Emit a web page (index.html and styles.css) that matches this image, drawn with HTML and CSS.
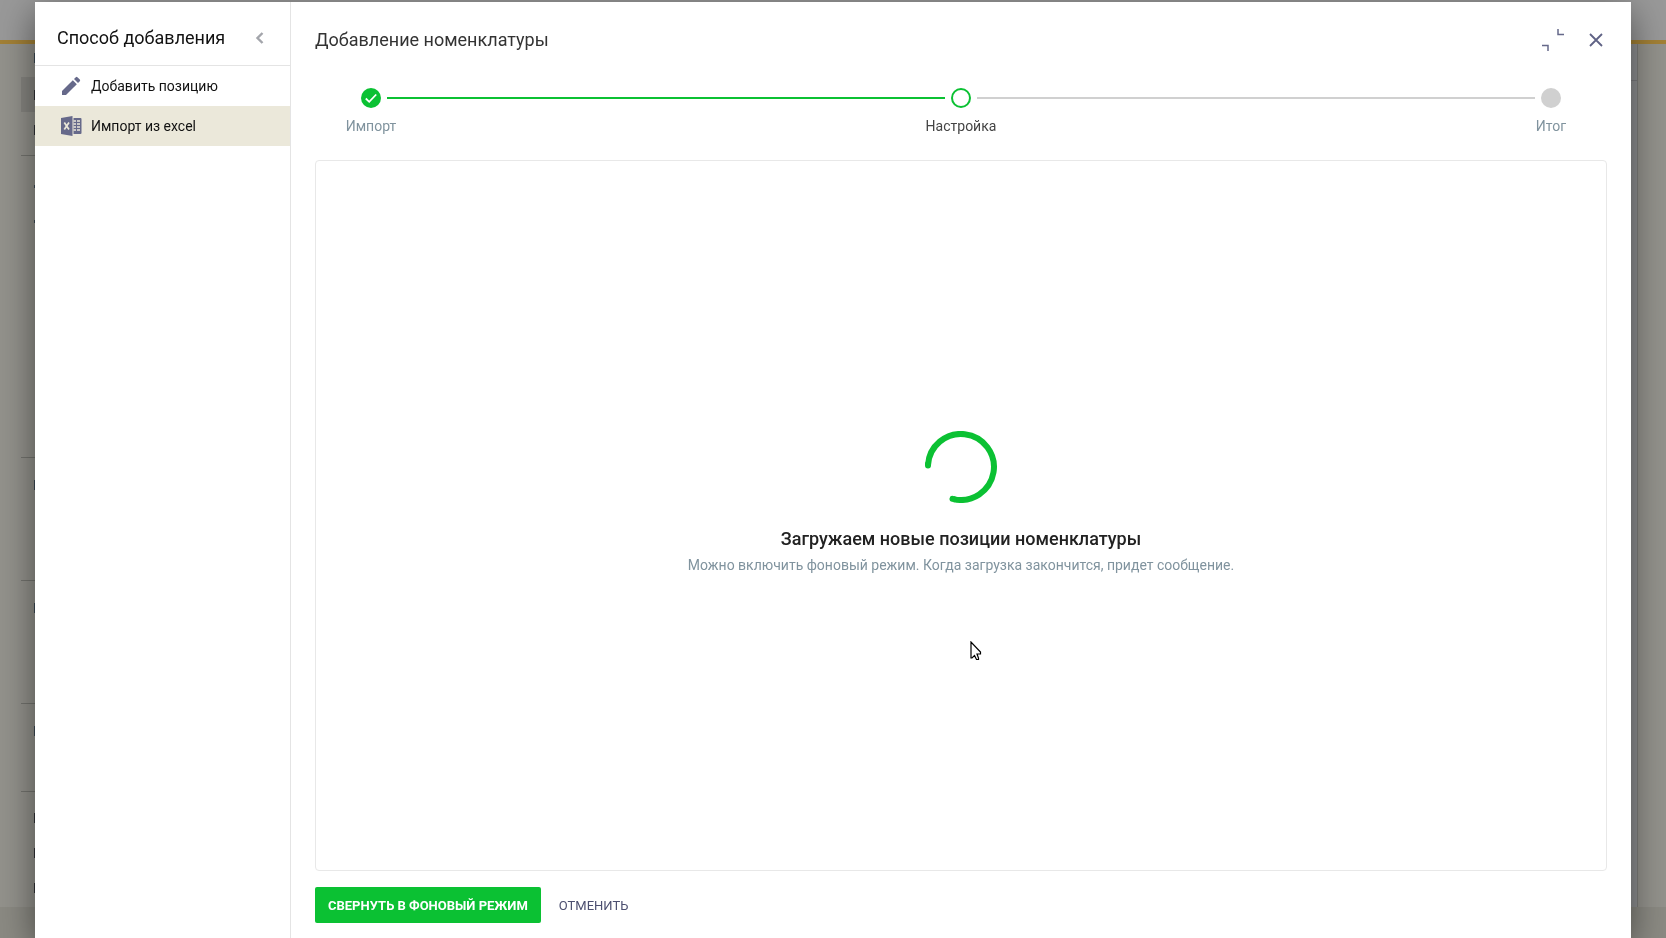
FILE: index.html
```
<!DOCTYPE html>
<html lang="ru">
<head>
<meta charset="utf-8">
<title>Добавление номенклатуры</title>
<link rel="stylesheet" href="styles.css">
</head>
<body>
<div class="page" aria-hidden="true">
  <div class="page-top"></div>
  <div class="page-body">
    <div class="page-nav">
      <div class="nav-group first">
        <div class="nav-row"><i class="mark blue"></i></div>
        <div class="nav-row active"><i class="mark"></i></div>
        <div class="nav-row"><i class="mark"></i></div>
      </div>
      <div class="nav-group tall">
        <div class="nav-row"><i class="mark short"></i></div>
        <div class="nav-row"><i class="mark short"></i></div>
      </div>
      <div class="nav-group mid"><div class="nav-row"><i class="mark blue"></i></div></div>
      <div class="nav-group mid"><div class="nav-row"><i class="mark blue"></i></div></div>
      <div class="nav-group low"><div class="nav-row"><i class="mark blue"></i></div></div>
      <div class="nav-group last">
        <div class="nav-row"><i class="mark"></i></div>
        <div class="nav-row"><i class="mark"></i></div>
        <div class="nav-row"><i class="mark"></i></div>
      </div>
    </div>
    <div class="page-content"><div class="page-bar"></div></div>
  </div>
  <div class="page-foot"></div>
</div>

<div class="dialog" role="dialog" aria-labelledby="dialog-title">
  <aside class="side">
    <header class="side-head">
      <h2 class="side-title">Способ добавления</h2>
      <button class="icon-btn" type="button" aria-label="Свернуть панель">
        <svg width="10" height="14" viewBox="0 0 10 14"><path d="M8.500 2L3.500 7l5 5" fill="none" stroke="#a3a5ab" stroke-width="2.400"/></svg>
      </button>
    </header>
    <nav>
      <a class="method" href="#">
        <svg width="22" height="22" viewBox="0 0 22 22" fill="#66698a"><path d="M2 16 12.800 5.200 16.800 9.200 6 20H2z"/><path d="M14 4 15.800 2.200Q16.600 1.400 17.400 2.200L19.800 4.600Q20.600 5.400 19.800 6.200L18 8z"/></svg>
        Добавить позицию
      </a>
      <a class="method selected" href="#" aria-current="page">
        <svg width="22" height="22" viewBox="0 0 22 22"><path fill="#66698a" d="M1 3 12.500 1V21L1 19zM13.500 3H20.500Q21.500 3 21.500 4V18Q21.500 19 20.500 19H13.500z"/><path d="M13.500 6h2.500M17 6h3M13.500 9h2.500M17 9h3M13.500 12h2.500M17 12h3M13.500 15h2.500M17 15h3" stroke="#ebe8da" stroke-width="1.400"/><path d="M4.300 7.500 9 14.500M9 7.500 4.300 14.500" stroke="#ebe8da" stroke-width="1.700"/></svg>
        Импорт из excel
      </a>
    </nav>
  </aside>

  <main class="main">
    <header class="main-head">
      <h1 class="main-title" id="dialog-title">Добавление номенклатуры</h1>
      <div class="tools">
        <button class="icon-btn" type="button" aria-label="Свернуть окно">
          <svg width="22" height="22" viewBox="0 0 22 22"><path d="M16 0v5.500h6M0 16.500h6V22" fill="none" stroke="#66698a" stroke-width="1.500"/></svg>
        </button>
        <button class="icon-btn" type="button" aria-label="Закрыть">
          <svg width="14" height="14" viewBox="0 0 14 14"><path d="M1 1l12 12M13 1L1 13" fill="none" stroke="#5f6285" stroke-width="1.800"/></svg>
        </button>
      </div>
    </header>

    <div class="stepper">
      <div class="track">
        <svg class="dot" viewBox="0 0 20 20"><circle cx="10" cy="10" r="10" fill="#0bc133"/><path d="M4.800 10.500 8.200 13.800 15.200 6.500" fill="none" stroke="#fff" stroke-width="1.800"/></svg>
        <span class="line done"></span>
        <svg class="dot" viewBox="0 0 20 20"><circle cx="10" cy="10" r="9" fill="#fff" stroke="#0bc133" stroke-width="2"/></svg>
        <span class="line"></span>
        <svg class="dot" viewBox="0 0 20 20"><circle cx="10" cy="10" r="10" fill="#d0d0d0"/></svg>
      </div>
      <ol class="labels">
        <li>Импорт</li>
        <li class="current" aria-current="step">Настройка</li>
        <li>Итог</li>
      </ol>
    </div>

    <section class="panel" role="status">
      <svg class="spinner" width="72" height="72" viewBox="0 0 72 72"><path d="M3 34A33 33 0 1 1 28.500 68.100" fill="none" stroke="#0bc133" stroke-width="6"/><path d="M3 33v1.500M29 68.200l-1.500-.35" fill="none" stroke="#0bc133" stroke-width="6" stroke-linecap="round"/></svg>
      <p class="status">Загружаем новые позиции номенклатуры</p>
      <p class="hint">Можно включить фоновый режим. Когда загрузка закончится, придет сообщение.</p>
      <svg class="cursor" width="12" height="20" viewBox="0 0 12 20"><path d="M1 1V17H2L4.500 14.500 6.500 18.500H8.500V17L7 13H10.500V11z" fill="#fff" stroke="#000" stroke-width="1.200"/></svg>
    </section>

    <footer class="actions">
      <button class="primary" type="button">СВЕРНУТЬ В ФОНОВЫЙ РЕЖИМ</button>
      <button class="plain" type="button">ОТМЕНИТЬ</button>
    </footer>
  </main>
</div>
</body>
</html>
```
FILE: styles.css
```
* { box-sizing: border-box; }
body { margin: 0; font-family: Roboto, "Liberation Sans", sans-serif; font-size: 14px; overflow: hidden; }
h1, h2, p, ol { margin: 0; padding: 0; font-weight: 400; }
svg { display: block; flex: none; }
button { font: inherit; border: 0; background: none; padding: 0; cursor: pointer; }

.page { height: 100vh; display: flex; flex-direction: column; background: #93928c; }
.page-top { height: 44px; flex: none; background: #999; border-bottom: 4px solid #a38136; }
.page-body { flex: 1; min-height: 0; display: flex; justify-content: space-between; }
.page-foot { height: 31px; flex: none; background: #8b8a83; }
.page-nav { width: 240px; padding-left: 21px; }
.nav-group { border-top: 1px solid #74746f; padding-top: 13px; }
.nav-group.first { height: 111px; border: 0; padding: 0; }
.nav-group.tall { height: 302px; }
.nav-group.mid { height: 123px; padding-top: 9px; }
.nav-group.low { height: 88px; padding-top: 9px; }
.nav-group.last { padding-top: 8px; }
.nav-row { height: 35px; display: flex; align-items: center; padding-left: 13px; }
.nav-group.first .nav-row:first-child { height: 33px; padding-bottom: 5px; }
.nav-row.active { background: #868580; }
.mark { width: 60px; height: 10px; background: #303236; }
.mark.blue { background: #3d4a54; }
.mark.short { height: 3px; background: #3d4a54; }
.page-content { width: 400px; margin-right: 28px; background: #909193; border-right: 1px solid #7d7d7b; }
.page-bar { height: 37px; border-bottom: 1px solid #7d7d80; }

.dialog { position: fixed; top: 2px; right: 35px; bottom: 0; left: 35px; display: flex; background: #fff; box-shadow: 0 10px 34px rgba(0, 0, 0, .5); }

.side { width: 256px; flex: none; border-right: 1px solid #e4e4e4; }
.side-head { height: 64px; padding: 8px 26px 0 22px; display: flex; align-items: center; justify-content: space-between; border-bottom: 1px solid #e4e4e4; }
.side-title { font-size: 18px; line-height: 24px; color: #111; }
.method { height: 40px; padding-left: 25px; display: flex; align-items: center; gap: 9px; font-size: 14px; color: #111; text-decoration: none; }
.method.selected { background: #ebe8da; }

.main { flex: 1; min-width: 0; padding: 0 24px; display: flex; flex-direction: column; }
.main-head { height: 76px; flex: none; display: flex; align-items: center; justify-content: space-between; }
.main-title { font-size: 18px; line-height: 24px; color: #333; }
.tools { display: flex; align-items: center; gap: 25px; padding-right: 4px; }

.stepper { margin-top: 10px; }
.track { display: flex; align-items: center; gap: 6px; padding: 0 46px; }
.dot { width: 20px; height: 20px; }
.line { flex: 1; height: 2px; background: #d0d0d0; }
.line.done { background: #0bc133; }
.labels { display: flex; justify-content: space-between; list-style: none; margin-top: 8px; color: #80939e; font-size: 14px; line-height: 20px; }
.labels li { width: 112px; text-align: center; }
.labels .current { color: #444; }

.panel { position: relative; flex: 1; min-height: 0; margin-top: 24px; padding-bottom: 26px; border: 1px solid #e8e8e8; border-radius: 4px; display: flex; flex-direction: column; align-items: center; justify-content: center; text-align: center; }
.status { margin-top: 24px; font-size: 18px; line-height: 24px; font-weight: 500; color: #222; }
.hint { margin-top: 4px; font-size: 14px; line-height: 20px; color: #80939e; }
.cursor { position: absolute; top: calc(50% + 125px); left: calc(50% + 9px); }

.actions { flex: none; display: flex; gap: 18px; padding: 16px 0 15px; }
.primary { height: 36px; padding: 0 13px; border-radius: 2px; background: #0bc133; color: #fff; font-size: 13px; font-weight: 700; }
.plain { height: 36px; color: #4c4f70; font-size: 13px; }
```
